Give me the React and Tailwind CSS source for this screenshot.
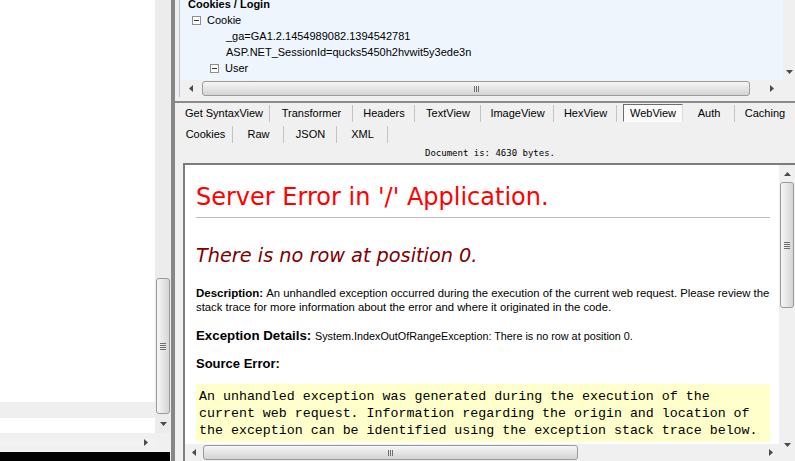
import React from "react"

// small win7-ish scroll arrow
const Arrow = ({ dir }) => {
  const wide = dir === "up" || dir === "down"
  const d = {
    up: "M0 4L3.5 0L7 4Z",
    down: "M0 0L7 0L3.5 4Z",
    left: "M4 0L4 7L0 3.5Z",
    right: "M0 0L4 3.5L0 7Z",
  }[dir]
  return (
    <svg width={wide ? 7 : 4} height={wide ? 4 : 7} viewBox={wide ? "0 0 7 4" : "0 0 4 7"}>
      <path d={d} fill="#4b4b4b" />
    </svg>
  )
}

const GripV = () => (
  <div className="flex flex-col gap-[1px]">
    <div className="h-[1px] w-[6px] bg-[#6f6f6f]" />
    <div className="h-[1px] w-[6px] bg-[#6f6f6f]" />
    <div className="h-[1px] w-[6px] bg-[#6f6f6f]" />
    <div className="h-[1px] w-[6px] bg-[#6f6f6f]" />
  </div>
)

const GripH = () => (
  <div className="flex gap-[1px]">
    <div className="h-[6px] w-[1px] bg-[#6f6f6f]" />
    <div className="h-[6px] w-[1px] bg-[#6f6f6f]" />
    <div className="h-[6px] w-[1px] bg-[#6f6f6f]" />
  </div>
)

const MinusBox = () => (
  <span className="mr-[6px] inline-flex h-[9px] w-[9px] items-center justify-center border border-[#8f8f8f] bg-white">
    <span className="h-[1px] w-[5px] bg-[#333]" />
  </span>
)

const tabs1 = [
  { label: "Get SyntaxView", w: "w-[92px]", sep: true },
  { label: "Transformer", w: "w-[83px]", sep: true },
  { label: "Headers", w: "w-[62px]", sep: true },
  { label: "TextView", w: "w-[66px]", sep: true },
  { label: "ImageView", w: "w-[73px]", sep: true },
  { label: "HexView", w: "w-[63px]", sep: true },
  { label: "WebView", w: "w-[66px]", active: true },
  { label: "Auth", w: "w-[52px]", sep: true },
  { label: "Caching", w: "w-[60px]" },
]

const tabs2 = [
  { label: "Cookies", w: "w-[55px]", sep: true },
  { label: "Raw", w: "w-[51px]", sep: true },
  { label: "JSON", w: "w-[53px]", sep: true },
  { label: "XML", w: "w-[51px]", sep: true },
]

const Tab = ({ tab }) => {
  if (tab.active) {
    return (
      <div className={`flex h-[20px] shrink-0 items-center ${tab.w}`}>
        <div className="ml-[6px] flex h-[18px] w-[60px] items-center justify-center border border-t-[#6d6d6d] border-l-[#6d6d6d] border-r-[#dcdcdc] border-b-[#ffffff] bg-[#fafafa]">
          WebView
        </div>
      </div>
    )
  }
  return (
    <div className={`relative flex h-[20px] shrink-0 items-center justify-center ${tab.w}`}>
      {tab.label}
      {tab.sep && <div className="absolute right-0 top-[2px] h-[17px] w-[1px] bg-[#c4c4c4]" />}
    </div>
  )
}

export default function App() {
  return (
    <div className="flex h-[461px] w-[795px] overflow-hidden bg-[#f0f0f0] font-['Liberation_Sans',Arial,sans-serif] text-[11px] text-black">
      {/* left pane */}
      <div className="flex w-[171px] shrink-0 flex-col">
        <div className="flex h-[433px]">
          <div className="flex flex-1 flex-col justify-end bg-white pb-[15px]">
            <div className="h-[16px] bg-[#efefef]" />
          </div>
          <div className="flex w-[16px] flex-col justify-end bg-[#ececec]">
            <div className="mx-[1px] flex h-[136px] items-center justify-center rounded-[3px] border border-[#9b9b9b] bg-linear-to-r from-[#f6f6f6] to-[#d6d6d6]">
              <GripV />
            </div>
            <div className="flex h-[19px] items-center justify-center">
              <Arrow dir="down" />
            </div>
          </div>
        </div>
        <div className="flex h-[19px] items-center">
          <div className="flex flex-1 items-center justify-end bg-[#f2f2f2] pr-[7px]">
            <Arrow dir="right" />
          </div>
          <div className="w-[16px]" />
        </div>
        <div className="h-[9px] w-[170px] bg-black" />
      </div>

      {/* splitter */}
      <div className="w-[4px] shrink-0 bg-[#878787]" />

      {/* right pane */}
      <div className="flex min-w-0 flex-1 flex-col">
        {/* tree panel */}
        <div className="ml-[4px] flex h-[97px] flex-col border-l border-[#b8c3cf]">
          <div className="flex h-[80px]">
            <div className="min-w-0 flex-1 overflow-hidden bg-[#eef5fd] pl-[8px] leading-[16px]">
              <div className="-mt-[4px] font-bold">Cookies / Login</div>
              <div className="flex items-center pl-[4px]">
                <MinusBox />
                Cookie
              </div>
              <div className="pl-[38px]">_ga=GA1.2.1454989082.1394542781</div>
              <div className="pl-[38px]">ASP.NET_SessionId=qucks5450h2hvwit5y3ede3n</div>
              <div className="flex items-center pl-[22px]">
                <MinusBox />
                User
              </div>
            </div>
            <div className="flex w-[12px] flex-col justify-end bg-[#f0f0f0]">
              <div className="flex h-[17px] items-center justify-center">
                <Arrow dir="down" />
              </div>
            </div>
          </div>
          <div className="flex h-[17px] items-center bg-[#f0f0f0] pl-[3px]">
            <div className="flex w-[15px] justify-center">
              <Arrow dir="left" />
            </div>
            <div className="ml-[4px] flex h-[15px] w-[548px] items-center justify-center rounded-[3px] border border-[#9b9b9b] bg-linear-to-b from-[#f6f6f6] to-[#d4d4d4]">
              <GripH />
            </div>
            <div className="flex-1" />
            <div className="flex w-[16px] justify-center">
              <Arrow dir="right" />
            </div>
            <div className="w-[15px]" />
          </div>
        </div>

        <div className="mt-[4px] h-[2px] bg-[#8a8a8a]" />

        {/* tabs */}
        <div className="flex pl-[3px]">
          {tabs1.map((t) => (
            <Tab key={t.label} tab={t} />
          ))}
        </div>
        <div className="mt-[1px] flex pl-[3px]">
          {tabs2.map((t) => (
            <Tab key={t.label} tab={t} />
          ))}
        </div>

        <div className="flex h-[19px] items-center justify-center pl-[10px] font-['DejaVu_Sans_Mono',monospace] text-[9px]">
          Document is: 4630 bytes.
        </div>

        {/* web view */}
        <div className="ml-[8px] flex min-h-0 flex-1 border-l-2 border-t-2 border-[#7c7c7c]">
          <div className="flex min-w-0 flex-1 flex-col">
            <div className="min-h-0 flex-1 overflow-hidden bg-white pl-[11px] pr-[9px] pt-[18px]">
              <h1 className="font-['DejaVu_Sans',Verdana,sans-serif] text-[24px] leading-[28px] text-[#ff0000]">
                Server Error in '/' Application.
              </h1>
              <div className="mt-[6px] h-[1px] bg-[#bdbdbd]" />
              <h2 className="mt-[27px] font-['DejaVu_Sans',Verdana,sans-serif] text-[19.3px] italic leading-[22px] text-[#800000]">
                There is no row at position 0.
              </h2>
              <p className="mt-[19px] whitespace-nowrap text-[11.3px] leading-[14px]">
                <b className="text-[11.5px]">Description: </b>
                An unhandled exception occurred during the execution of the current web request. Please review the
                <br />
                stack trace for more information about the error and where it originated in the code.
              </p>
              <p className="mt-[15px] whitespace-nowrap text-[10.8px] leading-[14px]">
                <b className="text-[13.3px]">Exception Details: </b>
                System.IndexOutOfRangeException: There is no row at position 0.
              </p>
              <p className="mt-[13px] text-[13px] font-bold leading-[16px]">Source Error:</p>
              <div className="mt-[12px] whitespace-nowrap bg-[#ffffcc] pb-[3px] pl-[3px] pt-[4px] font-['Liberation_Mono','Courier_New',monospace] text-[13.3px] leading-[17px]">
                An unhandled exception was generated during the execution of the
                <br />
                current web request. Information regarding the origin and location of
                <br />
                the exception can be identified using the exception stack trace below.
              </div>
            </div>
            <div className="flex h-[17px] shrink-0 items-center bg-[#f0f0f0]">
              <div className="flex w-[17px] justify-center">
                <Arrow dir="left" />
              </div>
              <div className="ml-[1px] flex h-[15px] w-[375px] items-center justify-center rounded-[3px] border border-[#9b9b9b] bg-linear-to-b from-[#f6f6f6] to-[#d4d4d4]">
                <GripH />
              </div>
              <div className="flex-1" />
              <div className="flex w-[16px] justify-center">
                <Arrow dir="right" />
              </div>
            </div>
          </div>
          <div className="flex w-[16px] shrink-0 flex-col bg-[#f0f0f0]">
            <div className="flex h-[17px] items-center justify-center">
              <Arrow dir="up" />
            </div>
            <div className="mx-[1px] flex h-[126px] items-center justify-center rounded-[3px] border border-[#9b9b9b] bg-linear-to-r from-[#f6f6f6] to-[#d6d6d6]">
              <GripV />
            </div>
            <div className="flex-1" />
            <div className="flex h-[17px] items-center justify-center">
              <Arrow dir="down" />
            </div>
            <div className="h-[8px]" />
          </div>
        </div>
      </div>
    </div>
  )
}
